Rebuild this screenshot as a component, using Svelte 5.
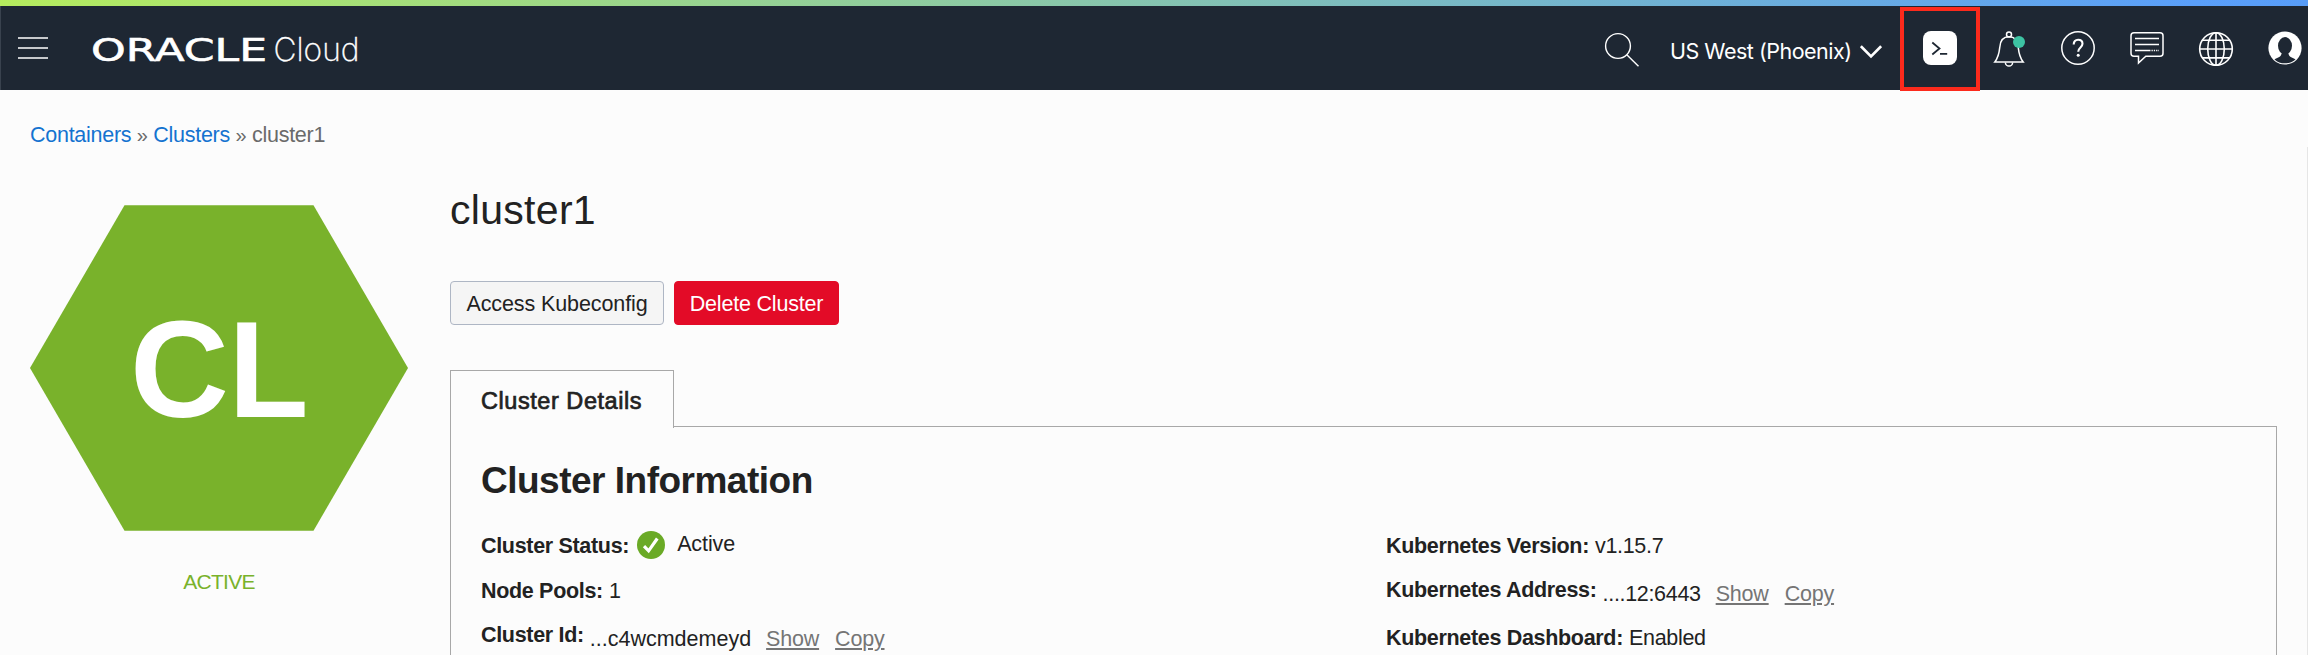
<script>
  const crumbs = ['Containers', 'Clusters'];
  const left = [
    { label: 'Cluster Status:', value: 'Active', kind: 'status' },
    { label: 'Node Pools:', value: '1', kind: 'plain' },
    { label: 'Cluster Id:', value: '...c4wcmdemeyd', kind: 'secret' }
  ];
  const right = [
    { label: 'Kubernetes Version:', value: 'v1.15.7', kind: 'plain' },
    { label: 'Kubernetes Address:', value: '....12:6443', kind: 'secret' },
    { label: 'Kubernetes Dashboard:', value: 'Enabled', kind: 'plain' }
  ];
</script>

{#snippet field(f)}
  <div class="field {f.kind}">
    <strong>{f.label}</strong>
    {#if f.kind === 'status'}
      <svg class="check" width="28" height="28" viewBox="0 0 28 28">
        <circle cx="14" cy="14" r="14" fill="#6aaa26" />
        <path d="M7 15.2l4.6 4.6L20.3 7.5" fill="none" stroke="#fff" stroke-width="3.2" />
      </svg>
    {/if}
    <span class="value">{f.value}</span>
    {#if f.kind === 'secret'}
      <a class="show" href="#show">Show</a>
      <a class="copy" href="#copy">Copy</a>
    {/if}
  </div>
{/snippet}

<div class="page">
  <div class="stripe"></div>
  <header>
    <svg class="menu" width="30" height="24" viewBox="0 0 30 24" stroke="#fff" stroke-width="1.7">
      <path d="M0 2h30M0 12h30M0 22h30" />
    </svg>
    <svg class="brand" width="300" height="56" viewBox="0 0 300 56" fill="#fff">
      <text x="8" y="38" font-family="DejaVu Sans" font-size="31.5" stroke="#fff" stroke-width=".6" textLength="176" lengthAdjust="spacingAndGlyphs">ORACLE</text>
      <text x="190.500" y="38" font-family="Inter" font-weight="200" font-size="32.5" stroke="#fff" stroke-width=".3" textLength="86" lengthAdjust="spacingAndGlyphs">Cloud</text>
    </svg>
    <div class="tools">
      <svg class="search" width="36" height="36" viewBox="0 0 36 36" fill="none" stroke="#fff" stroke-width="1.4">
        <circle cx="14" cy="14" r="12.4" /><path d="M22.8 22.8L34.5 34.2" />
      </svg>
      <span class="region">US West (Phoenix)</span>
      <svg class="chevron" width="22" height="14" viewBox="0 0 22 14" fill="none" stroke="#fff" stroke-width="2.6">
        <path d="M.9 1.2L11 11.3 21.1 1.2" />
      </svg>
      <div class="icons">
        <div class="shell">
          <svg width="40" height="40" viewBox="0 0 40 40" fill="none">
            <rect x="3" y="3" width="34" height="34" rx="8" fill="#fff" />
            <path d="M12.3 14.5l7.2 6-7.2 6M20 25.8h7.2" stroke="#1e2733" stroke-width="1.8" />
          </svg>
        </div>
        <svg width="40" height="40" viewBox="0 0 40 40" fill="none" stroke="#fff" stroke-width="1.5">
          <circle cx="20" cy="6.4" r="2.5" />
          <path d="M5.8 34C9.5 29.5 10.2 25 10.8 19.2C11.2 12.8 14.4 8.8 20 8.8S28.8 12.8 29.2 19.2C29.8 25 30.5 29.5 34.2 34Z" />
          <path d="M16.4 34.4a3.6 3.6 0 0 0 7.2 0" />
          <circle cx="30" cy="14" r="6" fill="#3dc3a3" stroke="none" />
        </svg>
        <svg width="40" height="40" viewBox="0 0 40 40" fill="none" stroke="#fff" stroke-width="1.5">
          <circle cx="20" cy="20" r="16.2" />
          <path d="M15.7 16.4c0-2.8 1.7-4.6 4.4-4.6 2.6 0 4.4 1.6 4.4 4 0 3.7-4.3 3.6-4.3 8" stroke-width="2.1" />
          <circle cx="20.2" cy="27.2" r="1.5" fill="#fff" stroke="none" />
        </svg>
        <svg width="40" height="40" viewBox="0 0 40 40" fill="none" stroke="#fff" stroke-width="1.5">
          <path d="M7 4.7H33a3 3 0 0 1 3 3V25.3a3 3 0 0 1-3 3H18.8L11.5 35V28.3H7a3 3 0 0 1-3-3V7.7a3 3 0 0 1 3-3Z" />
          <path d="M8 10.5H32M8 16.5H32M8 22.6H23.5" />
          <path d="M24.5 22.6H32" stroke-dasharray="1.3 1" />
        </svg>
        <svg width="40" height="40" viewBox="0 0 40 40" fill="none" stroke="#fff" stroke-width="1.6">
          <circle cx="20" cy="21" r="16.3" />
          <ellipse cx="20" cy="21" rx="8.3" ry="16.3" />
          <path d="M20 4.7V37.3M3.7 21H36.3M6.2 12.3H33.8M6.2 29.9H33.8" />
        </svg>
        <svg width="40" height="40" viewBox="0 0 40 40">
          <circle cx="20" cy="20" r="16.6" fill="#fff" />
          <path d="M9.8 31.6C12.600 30.100 15.500 29.500 16.700 26.500H23.300C24.500 29.500 27.400 30.100 30.200 31.600C27.500 34.200 24 35.400 20 35.400S12.500 34.200 9.800 31.600Z" fill="#fff" />
          <ellipse cx="20" cy="17.8" rx="7" ry="8.700" fill="#1e2733" />
          <path d="M9.500 31.400C12.300 29.900 15.700 29.300 16.500 25.800L18 24.500H22L23.500 25.800C24.300 29.300 27.700 29.900 30.500 31.400C27.700 34 24.200 35.300 20 35.300S12.300 34 9.500 31.400Z" fill="#1e2733" />
        </svg>
      </div>
    </div>
  </header>

  <nav class="crumbs">
    {#each crumbs as c}<a href="#{c}">{c}</a><span class="sep">»</span>{/each}<span>cluster1</span>
  </nav>

  <main>
    <aside>
      <svg class="hex" width="378" height="326" viewBox="0 0 378 326">
        <polygon points="94.500,.3 283.500,.3 378,163 283.500,325.700 94.500,325.700 0,163" fill="#79b22b" />
        <text x="100" y="212" font-family="Liberation Sans" font-weight="700" font-size="137" fill="#fff">C</text>
        <text x="198.500" y="212" font-family="Liberation Sans" font-weight="700" font-size="137" fill="#fff" textLength="80" lengthAdjust="spacingAndGlyphs">L</text>
      </svg>
      <div class="state">ACTIVE</div>
    </aside>
    <section>
      <h1>cluster1</h1>
      <div class="actions">
        <button class="access">Access Kubeconfig</button>
        <button class="delete">Delete Cluster</button>
      </div>
      <div class="tab">Cluster Details</div>
      <div class="panel">
        <h2>Cluster Information</h2>
        <div class="columns">
          <div>{#each left as f}{@render field(f)}{/each}</div>
          <div class="kube">{#each right as f}{@render field(f)}{/each}</div>
        </div>
      </div>
    </section>
  </main>
</div>

<style>
  :global(body) { background: #fcfcfc; overflow: hidden; }
  .page {
    box-sizing: border-box;
    height: 655px;
    overflow: hidden;
    font: 21.5px/24px "Liberation Sans", Arial, sans-serif;
    color: #222;
  }
  .stripe { height: 6px; background: linear-gradient(90deg, #b5ec5e 0%, #5a9ffa 95%, #589df8 100%); }
  header { display: flex; align-items: flex-start; height: 84px; background: #1e2733; box-shadow: inset 1px 0 #39424e; }
  svg { display: block; flex: none; }
  .menu { margin: 30px 0 0 18px; }
  .brand { margin: 17px 0 0 35px; }
  .tools { display: flex; align-items: flex-start; margin-left: auto; padding-right: 3px; }
  .search { margin: 26px 30px 0 0; }
  .region {
    width: 190px;
    margin-top: 32px;
    font: 21.5px/26px Inter, sans-serif;
    letter-spacing: -0.5px;
    color: #fff;
    white-space: nowrap;
  }
  .chevron { margin: 39px 18px 0 0; }
  .icons { display: flex; gap: 29px; padding-top: 22px; }
  .shell {
    box-sizing: border-box;
    width: 80px;
    height: 84px;
    margin: -21px -20px 0 0;
    padding: 17px 16px;
    border: 4px solid #fc2a1c;
  }

  .crumbs {
    display: flex;
    padding: 33px 0 0 30px;
    letter-spacing: -0.27px;
    color: #6a6a6a;
  }
  .crumbs a { color: #1473d0; text-decoration: none; }
  .sep { width: 12px; margin: 0 5px; text-align: center; font-size: 20px; }

  main { display: flex; align-items: flex-start; border-right: 1px solid #e6e6e6; }
  aside { width: 378px; margin: 58px 42px 0 30px; }
  .state { margin-top: 39px; text-align: center; font-size: 21px; letter-spacing: -0.75px; color: #79b22b; }
  section { flex: 1; padding: 39px 30px 0 0; }
  h1 { margin: 0; font-size: 41px; line-height: 48px; font-weight: 400; letter-spacing: 0.3px; }
  .actions { display: flex; gap: 10px; margin-top: 47px; }
  button {
    box-sizing: border-box;
    height: 44px;
    padding: 2px 0 0;
    border: 1px solid #aeb6c4;
    border-radius: 4px;
    font: 21.5px/24px "Liberation Sans", Arial, sans-serif;
    letter-spacing: -0.1px;
    white-space: nowrap;
  }
  .access { width: 214px; background: #f5f5f5; color: #222; }
  .delete { width: 165px; border-color: #e30b27; background: #e30b27; color: #fff; letter-spacing: -0.2px; }
  .tab {
    box-sizing: border-box;
    position: relative;
    width: 224px;
    height: 58px;
    margin-top: 45px;
    padding: 16px 0 0 30px;
    border: 1px solid #a8a8a8;
    border-bottom: 0;
    background: #fcfcfc;
    font-size: 23.5px;
    line-height: 28px;
    letter-spacing: 0.55px;
    -webkit-text-stroke: 0.7px #222;
  }
  .panel {
    height: 300px;
    margin-top: -2px;
    padding: 32px 0 0 30px;
    border: 1px solid #a8a8a8;
  }
  h2 { margin: 0; font-size: 37px; line-height: 44px; letter-spacing: -0.5px; }
  .columns { display: grid; grid-template-columns: 905px 1fr; margin-top: 31px; }
  .field { display: flex; height: 45px; white-space: nowrap; }
  .plain:last-child { padding-top: 2px; }
  strong { letter-spacing: -0.32px; }
  .value { margin-left: 6px; letter-spacing: 0; }
  .kube .value { letter-spacing: -0.32px; }
  .check { margin: -3px 0 0 8px; }
  .status .value { margin: -2px 0 0 12px; letter-spacing: -0.1px; }
  .secret strong { margin-top: -1px; }
  .secret .value, a.show, a.copy { margin-top: 3px; }
  a.show, a.copy {
    letter-spacing: -0.2px;
    color: #757575;
    text-decoration-thickness: 1.5px;
    text-underline-offset: 2px;
  }
  .show { margin-left: 15px; }
  .copy { margin-left: 16px; }
</style>
